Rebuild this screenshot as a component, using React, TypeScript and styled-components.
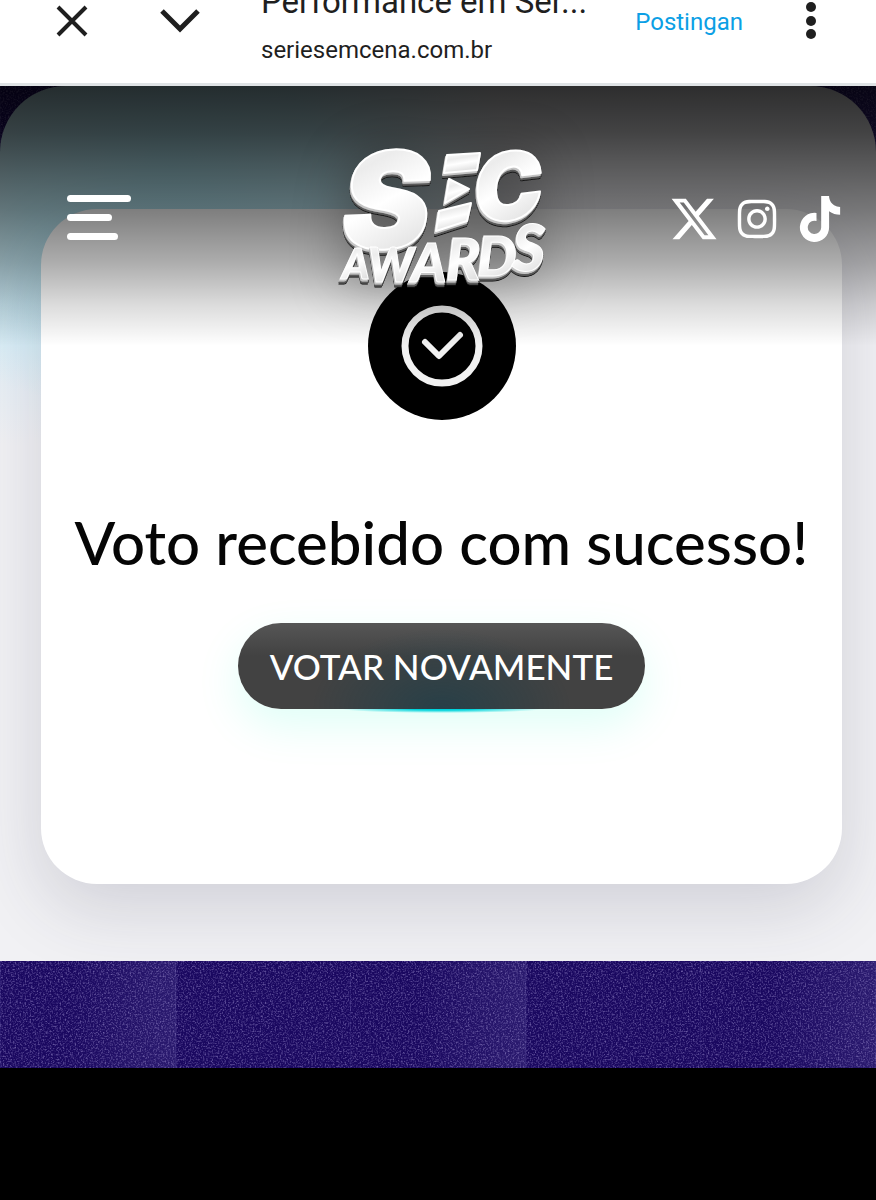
import styled, { createGlobalStyle } from 'styled-components'
import { FaInstagram, FaTiktok, FaXTwitter } from 'react-icons/fa6'

const GlobalStyle = createGlobalStyle`
  * {
    box-sizing: border-box;
  }

  body {
    margin: 0;
    background: #000;
    font-family: Roboto, "Liberation Sans", sans-serif;
  }

  button {
    border: 0;
    padding: 0;
    background: none;
    cursor: pointer;
  }
`

const BrowserBar = styled.header`
  display: flex;
  align-items: flex-end;
  height: 86px;
  padding: 0 47px 16px 52px;
  overflow: hidden;
  background: #fff;
  border-bottom: 3px solid #dfe3e5;
  color: #1f1f1f;
`

const BarButton = styled.button`
  display: flex;
  align-items: center;
  justify-content: center;
  width: 40px;
  height: 40px;
  margin-bottom: 26px;
  color: inherit;
`

const CollapseButton = styled(BarButton)`
  margin-left: 68px;
`

const PageInfo = styled.div`
  flex: 1;
  min-width: 0;
  margin-left: 61px;
`

const PageTitle = styled.div`
  font-size: 33px;
  line-height: 38px;
  white-space: nowrap;
`

const PageUrl = styled.div`
  margin: 14px 0 2px;
  font-size: 24px;
  line-height: 30px;
`

const PostLink = styled.a`
  margin: 0 46px 30px 0;
  color: #0c9fe5;
  font-size: 24px;
  line-height: 30px;
  text-decoration: none;
`

const Site = styled.div`
  position: relative;
  padding-bottom: 107px;
  overflow: hidden;
  background:
    repeating-linear-gradient(90deg, rgba(120, 110, 190, 0.14) 0 1px, transparent 1px 175px),
    repeating-linear-gradient(90deg, transparent 0 70px, rgba(110, 100, 170, 0.2) 176px, transparent 177px 350px),
    #1a0860;
`

const Grain = styled.svg`
  position: absolute;
  inset: 0;
  width: 100%;
  height: 100%;
`

const NavBar = styled.nav`
  position: absolute;
  z-index: 2;
  top: 0;
  left: 0;
  right: 0;
  display: grid;
  grid-template-columns: 1fr 230px 1fr;
  height: 260px;
  padding: 54px 33px 0 67px;
  background: linear-gradient(
    rgba(0, 0, 0, 0.81) 0%,
    rgba(0, 0, 0, 0.72) 18%,
    rgba(0, 0, 0, 0.61) 33%,
    rgba(0, 0, 0, 0.5) 48%,
    rgba(0, 0, 0, 0.32) 68%,
    rgba(0, 0, 0, 0.14) 84%,
    rgba(0, 0, 0, 0) 100%
  );
`

const Hamburger = styled.button`
  display: flex;
  flex-direction: column;
  gap: 12px;
  width: 64px;
  height: 46px;
  margin-top: 55px;
`

const HamburgerLine = styled.span<{ $width: number }>`
  width: ${({ $width }) => $width}px;
  height: 7px;
  border-radius: 4px;
  background: #fff;
`

const Logo = styled.svg`
  display: block;
  margin-left: -10px;
  overflow: visible;
  filter: drop-shadow(0 4px 26px rgba(0, 0, 0, 0.36));
`

const LogoText = styled.text`
  font-family: Inter, sans-serif;
  font-weight: 900;
  font-style: italic;
`

const LogoWord = styled(LogoText)`
  font-family: Lato, sans-serif;
`

const Socials = styled.div`
  display: flex;
  align-items: center;
  justify-content: flex-end;
  gap: 17px;
  height: 48px;
  margin-top: 55px;
`

const SocialLink = styled.a`
  display: flex;
  flex: none;
  justify-content: center;
  width: 46px;
  color: #fff;

  svg {
    flex: none;
  }
`

const Panel = styled.main`
  position: relative;
  padding: 123px 34px 77px 41px;
  border-radius: 66px 66px 0 0;
  background:
    radial-gradient(ellipse 340px 250px at 170px 80px, #b4eaf6 0%, rgba(180, 234, 246, 0.8) 45%, rgba(180, 234, 246, 0) 100%),
    radial-gradient(ellipse 120px 140px at 20px 220px, #dcedf7 0%, rgba(220, 237, 247, 0) 100%),
    #f1f1f4;
  overflow: hidden;
`

const Card = styled.section`
  display: flex;
  flex-direction: column;
  align-items: center;
  padding: 63px 20px 175px;
  border-radius: 56px;
  background: #fff;
  box-shadow: 0 24px 70px rgba(50, 45, 80, 0.17);
`

const CheckBadge = styled.div`
  display: flex;
  align-items: center;
  justify-content: center;
  width: 148px;
  height: 148px;
  border-radius: 50%;
  background: #000;
`

const Message = styled.h1`
  margin: 86px 0 45px;
  color: #050505;
  font-family: Lato, sans-serif;
  font-size: 60px;
  font-weight: 500;
  line-height: 72px;
  text-align: center;
`

const VoteButton = styled.button`
  height: 86px;
  padding: 0 32px;
  border-radius: 43px;
  background:
    radial-gradient(ellipse 130px 80px at 50% 100%, rgba(0, 60, 80, 0.4), transparent),
    linear-gradient(#565656, #424242 38%);
  box-shadow: 0 16px 44px rgba(0, 255, 190, 0.13);
  color: #fff;
  font-family: Lato, sans-serif;
  font-size: 35px;
  font-weight: 500;
`

const ButtonGlow = styled.div`
  width: 200px;
  height: 4px;
  margin-bottom: -4px;
  background: radial-gradient(ellipse 50% 100% at 50% 0, #00d4dc 30%, rgba(0, 224, 232, 0));
`

const menuLines = [64, 45, 51]

const socials = [
  { label: 'X', Icon: FaXTwitter, size: 50 },
  { label: 'Instagram', Icon: FaInstagram, size: 44 },
  { label: 'TikTok', Icon: FaTiktok, size: 46 },
]

const awards = [
  { letter: 'A', x: 12, y: 139, size: 42 },
  { letter: 'W', x: 38, y: 142, size: 47 },
  { letter: 'A', x: 81, y: 142, size: 54 },
  { letter: 'R', x: 116, y: 140, size: 57 },
  { letter: 'D', x: 147, y: 136, size: 56 },
  { letter: 'S', x: 182, y: 131, size: 64 },
]

function SecLogo () {
  return (
    <Logo width="230" height="160" viewBox="0 0 230 160" role="img" aria-label="SEC Awards">
      <defs>
        <linearGradient id="chrome" x1="0" y1="0" x2="0.3" y2="1">
          <stop offset="0" stopColor="#fff" />
          <stop offset="0.35" stopColor="#ececec" />
          <stop offset="0.6" stopColor="#fff" />
          <stop offset="1" stopColor="#dedede" />
        </linearGradient>
        <filter id="extrude" x="-10%" y="-10%" width="120%" height="130%">
          <feDropShadow dx="-1" dy="2" stdDeviation="0" floodColor="#c4c4c4" />
          <feDropShadow dx="0" dy="2" stdDeviation="0" floodColor="#5a5a5a" />
          <feDropShadow dx="0" dy="1" stdDeviation="0" floodColor="#181818" />
        </filter>
      </defs>
      <g fill="url(#chrome)" stroke="#fff" strokeWidth="2" strokeLinejoin="round" filter="url(#extrude)">
        <LogoText x="13" y="110" fontSize="134" transform="rotate(-2 13 110)">S</LogoText>
        <path d="M117 15L150 13 147 30 114 33Z" />
        <path d="M119 39L139 49 115 63Z" />
        <path d="M109 71L141 63 137 81 106 91Z" />
        <LogoText x="147" y="84" fontSize="93" transform="rotate(-7 147 84)">C</LogoText>
      </g>
      <g fill="url(#chrome)" stroke="#fff" strokeWidth="1" filter="url(#extrude)">
        {awards.map(({ letter, x, y, size }) => (
          <LogoWord key={x} x={x} y={y} fontSize={size}>{letter}</LogoWord>
        ))}
      </g>
    </Logo>
  )
}

export default function App (): JSX.Element {
  return (
    <>
      <GlobalStyle />
      <BrowserBar>
        <BarButton aria-label="Close">
          <svg width="40" height="40" viewBox="0 0 40 40" fill="none" stroke="currentColor" strokeWidth="4">
            <path d="M6 6L34 34M34 6L6 34" />
          </svg>
        </BarButton>
        <CollapseButton aria-label="Collapse">
          <svg width="40" height="40" viewBox="0 0 40 40" fill="none" stroke="currentColor" strokeWidth="5">
            <path d="M2 10L20 28 38 10" />
          </svg>
        </CollapseButton>
        <PageInfo>
          <PageTitle>Performance em Ser...</PageTitle>
          <PageUrl>seriesemcena.com.br</PageUrl>
        </PageInfo>
        <PostLink href="#post">Postingan</PostLink>
        <BarButton aria-label="More">
          <svg width="40" height="40" viewBox="0 0 40 40" fill="currentColor">
            <circle cx="22" cy="6" r="5" />
            <circle cx="22" cy="20" r="5" />
            <circle cx="22" cy="33" r="5" />
          </svg>
        </BarButton>
      </BrowserBar>
      <Site>
        <Grain aria-hidden="true">
          <filter id="grain">
            <feTurbulence type="fractalNoise" baseFrequency="0.6" numOctaves="2" seed="4" />
            <feColorMatrix values="0 0 0 0 0.32  0 0 0 0 0.26  0 0 0 0 0.6  1.5 0 0 0 -0.68" />
          </filter>
          <rect width="100%" height="100%" filter="url(#grain)" />
        </Grain>
        <NavBar>
          <Hamburger aria-label="Menu">
            {menuLines.map(width => <HamburgerLine key={width} $width={width} />)}
          </Hamburger>
          <SecLogo />
          <Socials>
            {socials.map(({ label, Icon, size }) => (
              <SocialLink key={label} href={`#${label}`} aria-label={label}>
                <Icon size={size} />
              </SocialLink>
            ))}
          </Socials>
        </NavBar>
        <Panel>
          <Card>
            <CheckBadge>
              <svg width="82" height="82" viewBox="0 0 82 82" fill="none" stroke="#f2f2f2">
                <circle cx="41" cy="41" r="37" strokeWidth="7" />
                <path d="M24 37L38 51 59 30" strokeWidth="6" strokeLinecap="round" strokeLinejoin="round" />
              </svg>
            </CheckBadge>
            <Message>Voto recebido com sucesso!</Message>
            <VoteButton>VOTAR NOVAMENTE</VoteButton>
            <ButtonGlow />
          </Card>
        </Panel>
      </Site>
    </>
  )
}
